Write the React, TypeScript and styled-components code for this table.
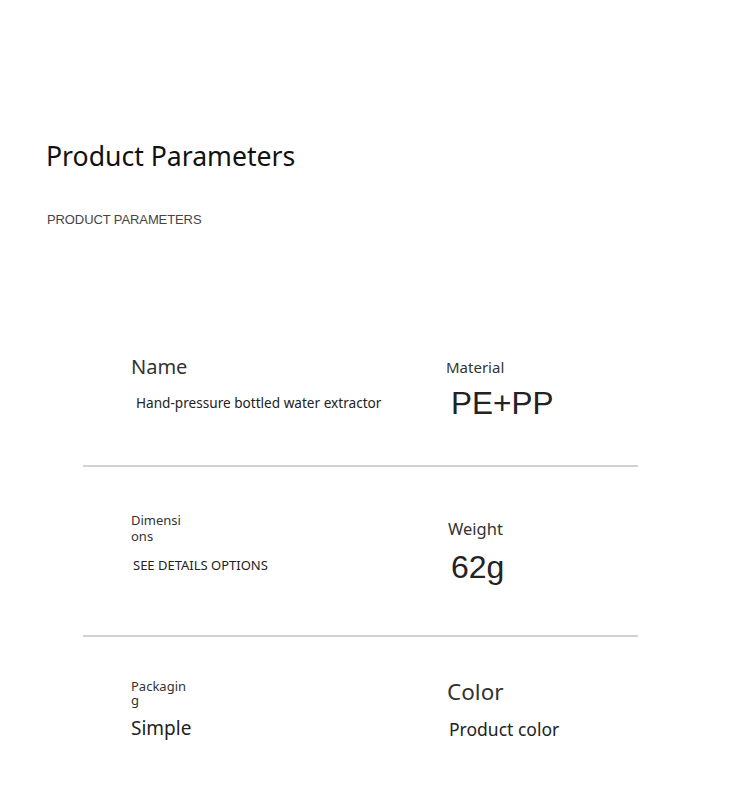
import * as React from "react";
import styled, { createGlobalStyle } from "styled-components";

const GlobalStyle = createGlobalStyle`
  body {
    margin: 0;
    background: #fff;
    font-family: "Noto Sans", "Open Sans", sans-serif;
    color: #222;
  }
`;

const Page = styled.div`
  width: 750px;
  height: 810px;
  overflow: hidden;
  padding-top: 138px;
  box-sizing: border-box;
`;

const Header = styled.div`
  padding-left: 46px;
`;

const Title = styled.h1`
  margin: 0;
  font-size: 26.6px;
  font-weight: 400;
  line-height: 36px;
  color: #111;
`;

const Subtitle = styled.div`
  margin-top: 38px;
  margin-left: 1px;
  font-family: "Liberation Sans", Arial, sans-serif;
  font-size: 13px;
  line-height: 16px;
  letter-spacing: -0.1px;
  color: #444;
`;

const Table = styled.div`
  margin: 125px 0 0 83px;
  width: 555px;
`;

const Row = styled.div<{ $height: number }>`
  display: flex;
  height: ${(p) => p.$height}px;
  padding-left: 48px;
  box-sizing: border-box;
`;

const Divider = styled.div`
  height: 2px;
  background: #d2d2d2;
`;

const Cell = styled.div<{ $width?: number; $top: number }>`
  display: flex;
  flex-direction: column;
  width: ${(p) => (p.$width ? `${p.$width}px` : "auto")};
  padding-top: ${(p) => p.$top}px;
`;

const Label = styled.div<{ $size: number; $wrap?: number; $line?: number; $shift?: number }>`
  font-size: ${(p) => p.$size}px;
  line-height: ${(p) => p.$line ?? Math.round(p.$size * 1.4)}px;
  width: ${(p) => (p.$wrap ? `${p.$wrap}px` : "auto")};
  word-break: break-all;
  margin-left: ${(p) => p.$shift ?? 0}px;
  color: #333;
`;

const Value = styled.div<{ $size: number; $gap: number; $shift?: number; $arial?: boolean }>`
  margin-top: ${(p) => p.$gap}px;
  margin-left: ${(p) => p.$shift ?? 0}px;
  font-family: ${(p) => (p.$arial ? '"Liberation Sans", Arial, sans-serif' : "inherit")};
  font-size: ${(p) => p.$size}px;
  line-height: ${(p) => Math.round(p.$size * 1.3)}px;
  color: #222;
`;

const App = () => (
  <>
    <GlobalStyle />
    <Page>
      <Header>
        <Title>Product Parameters</Title>
        <Subtitle>PRODUCT PARAMETERS</Subtitle>
      </Header>
      <Table>
        <Row $height={112}>
          <Cell $width={315} $top={0}>
            <Label $size={20}>Name</Label>
            <Value $size={13.6} $gap={13} $shift={5}>
              Hand-pressure bottled water extractor
            </Value>
          </Cell>
          <Cell $top={4}>
            <Label $size={15}>Material</Label>
            <Value $size={31.5} $gap={5} $shift={5} $arial>
              PE+PP
            </Value>
          </Cell>
        </Row>
        <Divider />
        <Row $height={168}>
          <Cell $width={315} $top={45}>
            <Label $size={13} $wrap={56} $line={16}>
              Dimensions
            </Label>
            <Value $size={13} $gap={13} $shift={2}>
              SEE DETAILS OPTIONS
            </Value>
          </Cell>
          <Cell $top={50}>
            <Label $size={16.5} $shift={2}>
              Weight
            </Label>
            <Value $size={32} $gap={6} $shift={5} $arial>
              62g
            </Value>
          </Cell>
        </Row>
        <Divider />
        <Row $height={169}>
          <Cell $width={315} $top={42}>
            <Label $size={13} $wrap={56} $line={14}>
              Packaging
            </Label>
            <Value $size={19} $gap={9}>
              Simple
            </Value>
          </Cell>
          <Cell $top={39}>
            <Label $size={22.5} $shift={1}>
              Color
            </Label>
            <Value $size={17.5} $gap={11} $shift={3}>
              Product color
            </Value>
          </Cell>
        </Row>
      </Table>
    </Page>
  </>
);

export default App;
